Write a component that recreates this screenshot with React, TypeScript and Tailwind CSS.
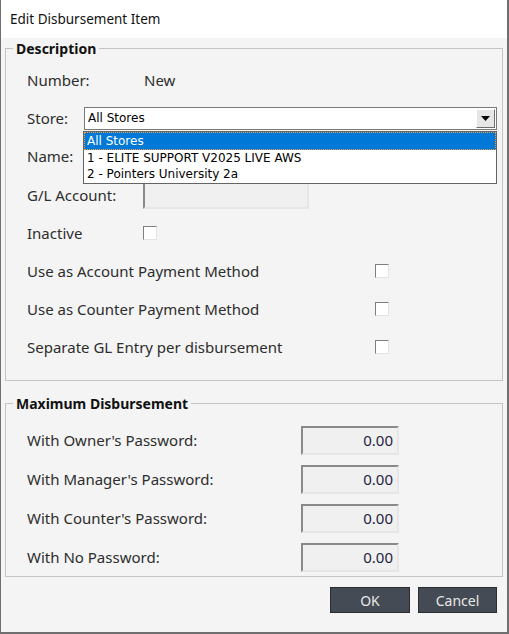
import React from "react";

const ui = { fontFamily: '"Noto Sans", "Open Sans", sans-serif' };
const combo = { fontFamily: '"DejaVu Sans", "Liberation Sans", sans-serif' };

function Check() {
  return (
    <span className="block w-[14px] h-[14px] bg-white border border-[#7f7f7f] border-r-[#e3e3e3] border-b-[#e3e3e3]" />
  );
}

function Sunken({ className, children }: { className: string; children?: React.ReactNode }) {
  return (
    <div
      className={
        "bg-[#f0f0f0] border-2 border-t-[#8a8a8a] border-l-[#8a8a8a] border-r-[#e6e6e6] border-b-[#e6e6e6] " +
        className
      }
    >
      {children}
    </div>
  );
}

function Row({ label, children }: { label: string; children?: React.ReactNode }) {
  return (
    <div className="h-[38px] flex items-center">
      <span className="w-[116px] shrink-0">{label}</span>
      {children}
    </div>
  );
}

function CheckRow({ label }: { label: string }) {
  return (
    <div className="h-[38px] flex items-center">
      <span className="w-[348px] shrink-0">{label}</span>
      <Check />
    </div>
  );
}

function AmountRow({ label }: { label: string }) {
  return (
    <div className="h-[39px] flex items-center">
      <span className="w-[274px] shrink-0">{label}</span>
      <Sunken className="w-[98px] h-[29px] flex items-center justify-end pr-[4px] text-[#1f2440]">0.00</Sunken>
    </div>
  );
}

export default function App() {
  return (
    <div
      className="w-[509px] h-[634px] bg-[#f4f4f4] border-l border-r-2 border-b-2 border-[#6f6f6f] flex flex-col text-[15px] text-[#2d2d2d]"
      style={ui}
    >
      <div className="h-[38px] shrink-0 bg-white flex items-center pl-[9px] text-[13.5px] text-[#111]">
        Edit Disbursement Item
      </div>

      <div className="relative mx-[4px] mt-[10px] h-[333px] border border-[#c4c4c4] pt-[12px] pl-[21px]">
        <span className="absolute -top-[11px] left-[7px] px-[3px] bg-[#f4f4f4] font-bold text-[14px] text-[#111]">
          Description
        </span>

        <div className="h-[38px] flex items-center">
          <span className="w-[117px] shrink-0">Number:</span>
          <span>New</span>
        </div>

        <div className="relative h-[38px] flex items-center">
          <span className="w-[57px] shrink-0">Store:</span>
          <div
            className="relative w-[413px] h-[23px] bg-white border border-[#7a7a7a] flex items-center pl-[3px] text-[12px] text-black"
            style={combo}
          >
            All Stores
            <span className="absolute right-[1px] top-[1px] w-[19px] h-[19px] bg-[#e6e6e6] border border-[#fdfdfd] border-r-[#6e6e6e] border-b-[#6e6e6e] flex items-center justify-center">
              <svg width="9" height="5" viewBox="0 0 9 5">
                <path d="M0 0h9L4.5 5z" fill="#000" />
              </svg>
            </span>
          </div>
          <div
            className="absolute left-[56px] top-[32px] z-10 w-[414px] bg-white border border-[#646464] text-[12px] text-black leading-[16px]"
            style={combo}
          >
            <div className="bg-[#0078d7] text-white border border-dotted border-[#f0a040] pl-[2px]">All Stores</div>
            <div className="pl-[3px]">1 - ELITE SUPPORT V2025 LIVE AWS</div>
            <div className="pl-[3px] pb-[1px]">2 - Pointers University 2a</div>
          </div>
        </div>

        <div className="h-[39px]">
          <Row label="Name:" />
        </div>

        <Row label="G/L Account:">
          <Sunken className="w-[166px] h-[28px]" />
        </Row>

        <Row label="Inactive">
          <Check />
        </Row>

        <CheckRow label="Use as Account Payment Method" />
        <CheckRow label="Use as Counter Payment Method" />
        <CheckRow label="Separate GL Entry per disbursement" />
      </div>

      <div className="relative mx-[4px] mt-[22px] h-[174px] border border-[#c4c4c4] pt-[17px] pl-[21px]">
        <span className="absolute -top-[11px] left-[7px] px-[3px] bg-[#f4f4f4] font-bold text-[14px] text-[#111]">
          Maximum Disbursement
        </span>
        <AmountRow label="With Owner's Password:" />
        <AmountRow label="With Manager's Password:" />
        <AmountRow label="With Counter's Password:" />
        <AmountRow label="With No Password:" />
      </div>

      <div className="flex justify-end gap-[8px] pr-[10px] mt-[10px]">
        <button className="w-[80px] h-[26px] bg-[#454b54] border border-[#2a2e33] text-[#e8e8e8] text-[14px]">OK</button>
        <button className="w-[79px] h-[26px] bg-[#454b54] border border-[#2a2e33] text-[#e8e8e8] text-[14px]">
          Cancel
        </button>
      </div>
    </div>
  );
}
